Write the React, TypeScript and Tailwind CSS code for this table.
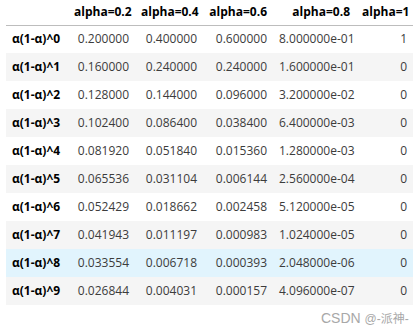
import React from "react";

const cols = ["alpha=0.2", "alpha=0.4", "alpha=0.6", "alpha=0.8", "alpha=1"];
const rows: string[][] = [
  ["0.200000", "0.400000", "0.600000", "8.000000e-01", "1"],
  ["0.160000", "0.240000", "0.240000", "1.600000e-01", "0"],
  ["0.128000", "0.144000", "0.096000", "3.200000e-02", "0"],
  ["0.102400", "0.086400", "0.038400", "6.400000e-03", "0"],
  ["0.081920", "0.051840", "0.015360", "1.280000e-03", "0"],
  ["0.065536", "0.031104", "0.006144", "2.560000e-04", "0"],
  ["0.052429", "0.018662", "0.002458", "5.120000e-05", "0"],
  ["0.041943", "0.011197", "0.000983", "1.024000e-05", "0"],
  ["0.033554", "0.006718", "0.000393", "2.048000e-06", "0"],
  ["0.026844", "0.004031", "0.000157", "4.096000e-07", "0"],
];

const widths = ["w-[62px]", "w-[67px]", "w-[68px]", "w-[70px]", "w-[83px]", "w-[57px]"];

export default function App() {
  return (
    <div
      className="relative w-[420px] h-[332px] bg-white overflow-hidden"
      style={{ fontFamily: '"Open Sans", "Liberation Sans", sans-serif' }}
    >
      <div className="pl-[6px]">
        <table className="table-fixed border-collapse w-[407px] text-[12px] text-[#3c3c3c]">
          <thead>
            <tr className="h-[25px] border-b border-[#bdbdbd]">
              <th className={`${widths[0]} px-[6px]`}></th>
              {cols.map((c, i) => (
                <th
                  key={c}
                  className={`${widths[i + 1]} px-[6px] text-right font-bold text-black whitespace-nowrap align-middle`}
                >
                  {c}
                </th>
              ))}
            </tr>
          </thead>
          <tbody>
            {rows.map((r, i) => {
              const bg = i === 8 ? "bg-[#e1f4fd]" : i % 2 === 1 ? "bg-[#f5f5f5]" : "bg-white";
              return (
                <tr key={i} className={`h-[28px] ${bg}`}>
                  <th className="px-[6px] text-left font-bold text-black whitespace-nowrap">
                    α(1-α)^{i}
                  </th>
                  {r.map((v, j) => (
                    <td key={j} className="px-[6px] text-right whitespace-nowrap">
                      {v}
                    </td>
                  ))}
                </tr>
              );
            })}
          </tbody>
        </table>
      </div>
      <div
        className="absolute left-[321px] top-[309px] text-[14px] leading-[18px] text-[#a8a8a8] whitespace-nowrap"
        style={{ fontFamily: '"Liberation Sans", "Noto Sans CJK SC", sans-serif' }}
      >
        CSDN <span className="text-[12px]">@-派神-</span>
      </div>
    </div>
  );
}
